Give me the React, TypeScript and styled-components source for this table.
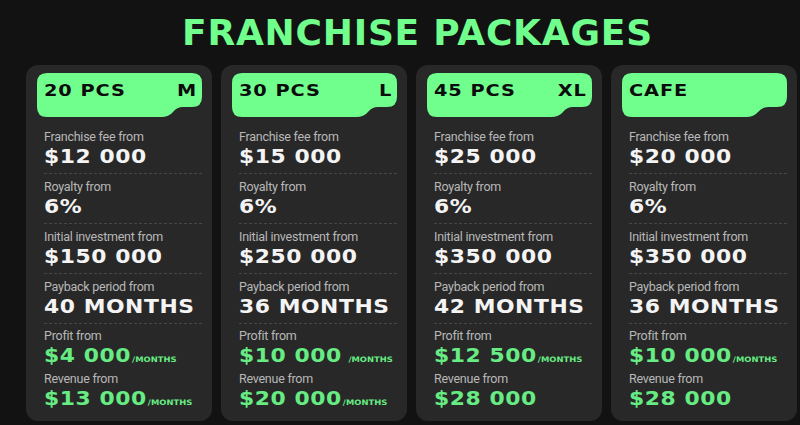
import * as React from 'react'
import styled, { createGlobalStyle } from 'styled-components'

const colors = {
  page: '#121212',
  card: '#282828',
  green: '#70fe8c',
  greenText: '#67ec84',
  label: '#b8b8b8',
  white: '#f4f4f4',
  ink: '#0c0c0c',
  divider: '#474747',
}

const wide = '"DejaVu Sans", "Liberation Sans", sans-serif'
const narrow = 'Roboto, "Liberation Sans", sans-serif'

interface Metric {
  label: string
  value: string
  unit?: string
  spaced?: boolean
}

interface Pack {
  name: string
  size?: string
  metrics: Metric[]
  earnings: Metric[]
}

const packs: Pack[] = [
  {
    name: '20 PCS',
    size: 'M',
    metrics: [
      { label: 'Franchise fee from', value: '$12 000' },
      { label: 'Royalty from', value: '6%' },
      { label: 'Initial investment from', value: '$150 000' },
      { label: 'Payback period from', value: '40 MONTHS' },
    ],
    earnings: [
      { label: 'Profit from', value: '$4 000', unit: '/MONTHS' },
      { label: 'Revenue from', value: '$13 000', unit: '/MONTHS' },
    ],
  },
  {
    name: '30 PCS',
    size: 'L',
    metrics: [
      { label: 'Franchise fee from', value: '$15 000' },
      { label: 'Royalty from', value: '6%' },
      { label: 'Initial investment from', value: '$250 000' },
      { label: 'Payback period from', value: '36 MONTHS' },
    ],
    earnings: [
      { label: 'Profit from', value: '$10 000', unit: '/MONTHS', spaced: true },
      { label: 'Revenue from', value: '$20 000', unit: '/MONTHS' },
    ],
  },
  {
    name: '45 PCS',
    size: 'XL',
    metrics: [
      { label: 'Franchise fee from', value: '$25 000' },
      { label: 'Royalty from', value: '6%' },
      { label: 'Initial investment from', value: '$350 000' },
      { label: 'Payback period from', value: '42 MONTHS' },
    ],
    earnings: [
      { label: 'Profit from', value: '$12 500', unit: '/MONTHS' },
      { label: 'Revenue from', value: '$28 000' },
    ],
  },
  {
    name: 'CAFE',
    metrics: [
      { label: 'Franchise fee from', value: '$20 000' },
      { label: 'Royalty from', value: '6%' },
      { label: 'Initial investment from', value: '$350 000' },
      { label: 'Payback period from', value: '36 MONTHS' },
    ],
    earnings: [
      { label: 'Profit from', value: '$10 000', unit: '/MONTHS' },
      { label: 'Revenue from', value: '$28 000' },
    ],
  },
]

const GlobalStyle = createGlobalStyle`
  html, body {
    margin: 0;
    background: ${colors.page};
    overflow: hidden;
  }
`

const Page = styled.main`
  width: 800px;
  height: 425px;
  overflow: hidden;
  padding-top: 13px;
  box-sizing: border-box;
`

const Title = styled.h1`
  margin: 0 0 12px;
  padding-left: 35px;
  font-family: ${wide};
  font-size: 36px;
  line-height: 40px;
  font-weight: 700;
  letter-spacing: 0.8px;
  text-align: center;
  color: ${colors.green};
`

const Grid = styled.section`
  display: grid;
  grid-template-columns: repeat(4, 186px);
  gap: 9px;
  padding-left: 26px;
`

const Card = styled.article`
  background: ${colors.card};
  border-radius: 12px;
  padding: 8px 10px 0 11px;
  height: 356px;
  box-sizing: border-box;
  overflow: hidden;
`

const Tag = styled.header`
  position: relative;
  height: 44px;
  display: flex;
  justify-content: space-between;
  align-items: flex-start;
  padding: 8px 6px 0 7px;
  box-sizing: border-box;
  font-family: ${wide};
  font-weight: 700;
  font-size: 16.5px;
  line-height: 20px;
  letter-spacing: 0.8px;
  color: ${colors.ink};
`

const TagShape = styled.svg`
  position: absolute;
  inset: 0;
  z-index: 0;
`

const TagText = styled.span<{ $end?: boolean }>`
  position: relative;
  z-index: 1;
  display: inline-block;
  transform: scaleX(1.17);
  transform-origin: ${p => (p.$end ? 'right' : 'left')} center;
  margin-right: ${p => (p.$end ? '-1px' : '0')};
`

const Body = styled.div`
  padding: 7px 0 0 7px;
`

const Row = styled.div<{ $divided?: boolean }>`
  padding: ${p => (p.$divided ? '6px 0 5px' : '5px 0 0')};
  border-bottom: ${p => (p.$divided ? `1px dashed ${colors.divider}` : 'none')};
`

const Label = styled.div`
  font-family: ${narrow};
  font-size: 12.5px;
  line-height: 14px;
  letter-spacing: -0.25px;
  color: ${colors.label};
  margin-bottom: 2px;
`

const Value = styled.div<{ $accent?: boolean }>`
  font-family: ${wide};
  font-weight: 700;
  font-size: 19.5px;
  line-height: 22px;
  letter-spacing: 0.5px;
  white-space: nowrap;
  transform: scaleX(1.12);
  transform-origin: left center;
  color: ${p => (p.$accent ? colors.greenText : colors.white)};
`

const Unit = styled.span<{ $spaced?: boolean }>`
  font-size: 7.5px;
  line-height: 0;
  letter-spacing: 0;
  margin-left: ${p => (p.$spaced ? '6px' : '1px')};
`

const TagBackground = () => (
  <TagShape width="165" height="44" viewBox="0 0 165 44">
    <path
      d="M10 0 H155 Q165 0 165 10 V24 Q165 34 155 34 H146 Q140 34 136 39 Q132 44 124 44 H10 Q0 44 0 34 V10 Q0 0 10 0 Z"
      fill={colors.green}
    />
  </TagShape>
)

const PackCard = ({ pack }: { pack: Pack }) => (
  <Card>
    <Tag>
      <TagBackground />
      <TagText>{pack.name}</TagText>
      {pack.size && <TagText $end>{pack.size}</TagText>}
    </Tag>
    <Body>
      {pack.metrics.map(m => (
        <Row key={m.label} $divided>
          <Label>{m.label}</Label>
          <Value>{m.value}</Value>
        </Row>
      ))}
      {pack.earnings.map(m => (
        <Row key={m.label}>
          <Label>{m.label}</Label>
          <Value $accent>
            {m.value}
            {m.unit && <Unit $spaced={m.spaced}>{m.unit}</Unit>}
          </Value>
        </Row>
      ))}
    </Body>
  </Card>
)

export default function App() {
  return (
    <Page>
      <GlobalStyle />
      <Title>FRANCHISE PACKAGES</Title>
      <Grid>
        {packs.map(p => (
          <PackCard key={p.name} pack={p} />
        ))}
      </Grid>
    </Page>
  )
}
